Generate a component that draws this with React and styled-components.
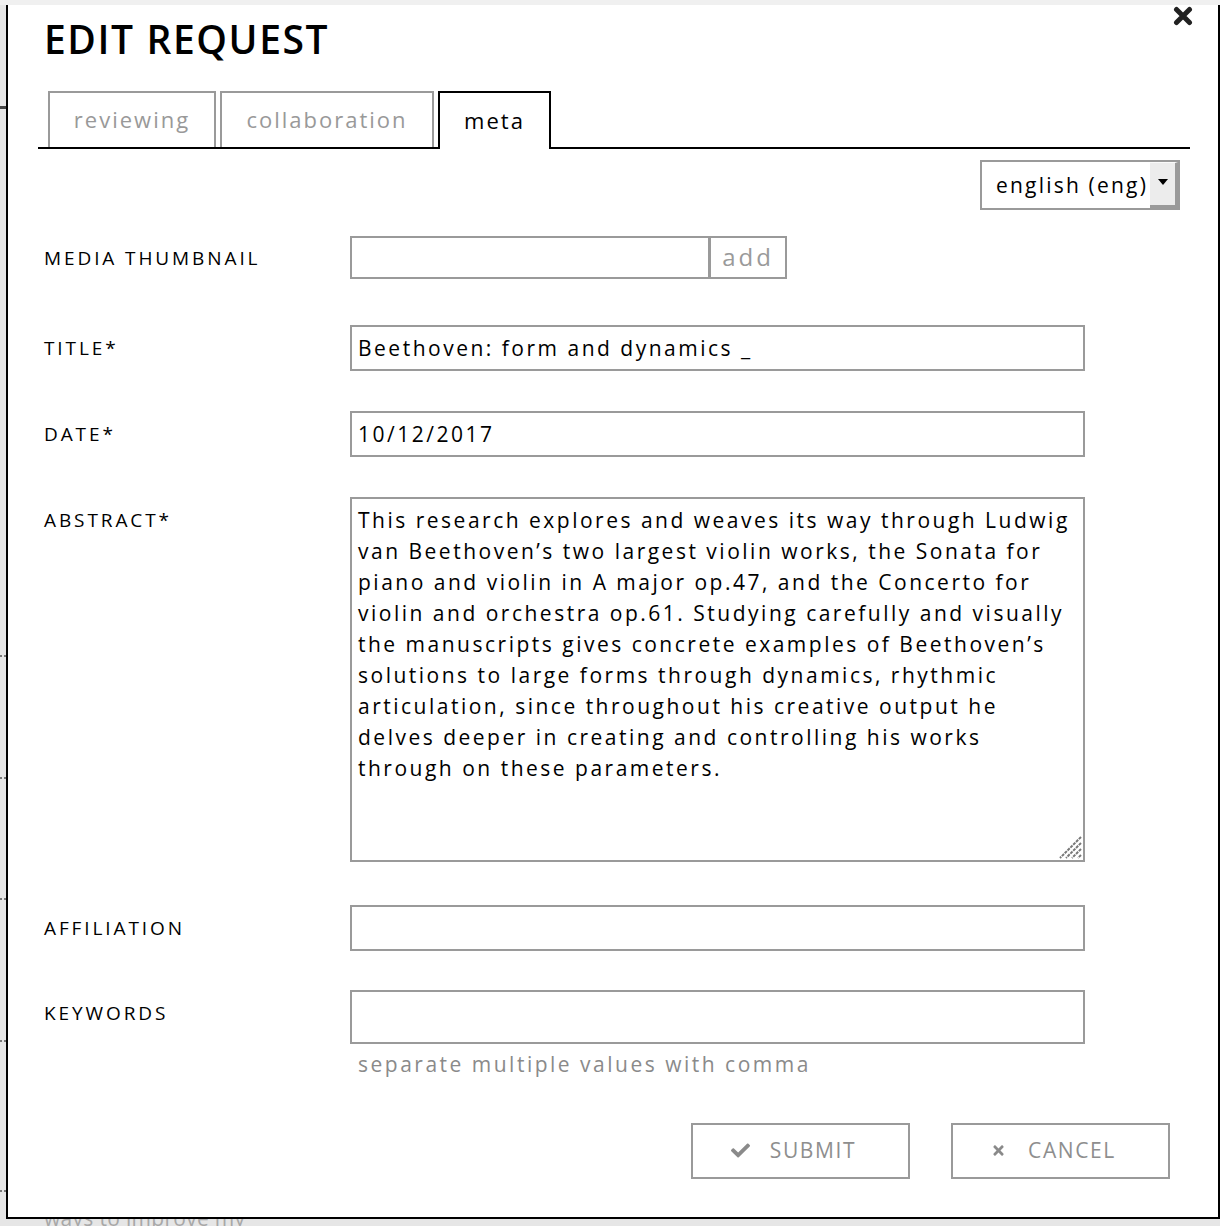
import React from "react";
import styled, { createGlobalStyle } from "styled-components";
import { FaCheck, FaTimes } from "react-icons/fa";

const Global = createGlobalStyle`
  html, body { margin: 0; padding: 0; }
  body {
    background: #e6e6e6;
    font-family: "Open Sans", "DejaVu Sans", sans-serif;
    width: 1220px;
    height: 1226px;
    overflow: hidden;
    position: relative;
  }
  * { box-sizing: border-box; }
`;

const TopStrip = styled.div`
  height: 5px;
  background: #f0f0f0;
`;

const BackdropText = styled.div`
  position: absolute;
  left: 44px;
  top: 1204px;
  font-size: 21px;
  letter-spacing: 0.3px;
  color: #a8a8a8;
`;

const SideMark = styled.div`
  position: absolute;
  left: 0;
  width: 6px;
  top: ${(p) => p.$top}px;
  border-top: 2px dotted #777;
`;

const SideBar = styled.div`
  position: absolute;
  left: 0;
  width: 6px;
  top: 106px;
  height: 3px;
  background: #444;
`;

const Modal = styled.div`
  position: absolute;
  left: 6px;
  top: 5px;
  width: 1214px;
  height: 1214px;
  background: #fff;
  border: 2px solid #000;
  border-top: none;
  padding: 0 30px;
`;

const Close = styled.button`
  position: absolute;
  right: 24px;
  top: 0;
  width: 22px;
  height: 22px;
  padding: 0;
  border: none;
  background: none;
  display: flex;
  align-items: center;
  justify-content: center;
`;

const Title = styled.h1`
  margin: 0;
  padding: 8px 0 0 6px;
  height: 86px;
  font-size: 39px;
  font-weight: 600;
  letter-spacing: 1.6px;
  color: #000;
  line-height: 52px;
`;

const TabBar = styled.div`
  display: flex;
  gap: 4px;
  padding-left: 10px;
  width: 1152px;
  border-bottom: 2px solid #000;
  height: 58px;
`;

const Tab = styled.div`
  height: ${(p) => (p.$active ? "58px" : "56px")};
  margin-bottom: ${(p) => (p.$active ? "-2px" : "0")};
  width: ${(p) => p.$w}px;
  border: 2px solid ${(p) => (p.$active ? "#000" : "#9a9a9a")};
  border-bottom: ${(p) => (p.$active ? "none" : "0")};
  background: #fff;
  display: flex;
  align-items: center;
  justify-content: center;
  font-size: 22px;
  letter-spacing: 2px;
  color: ${(p) => (p.$active ? "#000" : "#999")};
  padding-bottom: 2px;
`;

const LangRow = styled.div`
  display: flex;
  justify-content: flex-end;
  padding: 11px 8px 0 0;
  height: 87px;
`;

const Select = styled.div`
  width: 200px;
  height: 50px;
  border: 2px solid #9a9a9a;
  display: flex;
  align-items: stretch;
`;

const SelectText = styled.div`
  flex: 1;
  display: flex;
  align-items: center;
  padding-left: 14px;
  font-size: 21px;
  letter-spacing: 2.2px;
  color: #000;
  white-space: nowrap;
  overflow: hidden;
`;

const SelectArrow = styled.div`
  flex: 0 0 28px;
  background: #ececec;
  border-right: 3px solid #9a9a9a;
  border-bottom: 3px solid #9a9a9a;
  border-top: 1px solid #fafafa;
  display: flex;
  justify-content: center;
  align-items: center;
  padding-bottom: 4px;
  &::after {
    content: "";
    width: 0;
    height: 0;
    border-left: 5px solid transparent;
    border-right: 5px solid transparent;
    border-top: 6px solid #000;
  }
`;

const Form = styled.div`
  display: grid;
  grid-template-columns: 306px 735px;
  padding-left: 6px;
`;

const Label = styled.div`
  font-size: 19px;
  letter-spacing: 2.9px;
  color: #000;
  text-transform: uppercase;
  padding-top: ${(p) => p.$pt || 10}px;
  margin-bottom: ${(p) => p.$mb}px;
`;

const Field = styled.div`
  position: relative;
  margin-bottom: ${(p) => p.$mb}px;
`;

const Input = styled.input`
  display: block;
  width: 100%;
  height: ${(p) => p.$h || 46}px;
  border: 2px solid #9a9a9a;
  padding: 0 6px;
  font-family: "Open Sans", sans-serif;
  font-size: 21px;
  letter-spacing: 2.5px;
  color: #000;
  outline: none;
  background: #fff;
`;

const ThumbRow = styled.div`
  display: flex;
  width: 437px;
  height: 43px;
`;

const ThumbInput = styled.div`
  width: 361px;
  border: 2px solid #9a9a9a;
  border-right: 3px solid #9a9a9a;
`;

const AddButton = styled.div`
  flex: 1;
  border: 2px solid #9a9a9a;
  border-left: none;
  display: flex;
  align-items: center;
  justify-content: center;
  font-size: 24px;
  letter-spacing: 3px;
  color: #9a9a9a;
  padding-bottom: 3px;
`;

const TextArea = styled.textarea`
  display: block;
  width: 100%;
  height: 365px;
  border: 2px solid #9a9a9a;
  padding: 6px 6px;
  font-family: "Open Sans", sans-serif;
  font-size: 21px;
  line-height: 31px;
  letter-spacing: 2.5px;
  color: #000;
  outline: none;
  resize: none;
`;

const Grip = styled.svg`
  position: absolute;
  right: 3px;
  bottom: 3px;
  pointer-events: none;
`;

const Hint = styled.div`
  padding: 6px 0 0 8px;
  font-size: 21px;
  letter-spacing: 2.5px;
  color: #8a8a8a;
`;

const Actions = styled.div`
  display: flex;
  justify-content: flex-end;
  gap: 41px;
  padding: 45px 18px 0 0;
`;

const Button = styled.button`
  width: 219px;
  height: 56px;
  border: 2px solid #9a9a9a;
  background: #fff;
  display: flex;
  align-items: center;
  justify-content: center;
  gap: ${(p) => p.$gap}px;
  font-family: "Open Sans", sans-serif;
  font-size: 21px;
  letter-spacing: 1.6px;
  color: #8e8e8e;
  padding: 0 ${(p) => p.$pr}px 2px 0;
  svg { color: #8a8a8a; }
`;

const abstract =
  "This research explores and weaves its way through Ludwig van Beethoven\u2019s two largest violin works, the Sonata for piano and violin in A major op.47, and the Concerto for violin and orchestra op.61. Studying carefully and visually the manuscripts gives concrete examples of Beethoven\u2019s solutions to large forms through dynamics, rhythmic articulation, since throughout his creative output he delves deeper in creating and controlling his works through on these parameters.";

export default function App() {
  return (
    <>
      <Global />
      <TopStrip />
      <SideBar />
      {[655, 777, 898, 1040, 1190].map((t) => (
        <SideMark key={t} $top={t} />
      ))}
      <BackdropText>ways to improve my</BackdropText>
      <Modal>
        <Close aria-label="close">
          <svg width="20" height="20" viewBox="0 0 20 20">
            <path d="M3.5 3.5 L16.5 16.5 M16.5 3.5 L3.5 16.5" stroke="#222" strokeWidth="5" strokeLinecap="round" />
          </svg>
        </Close>
        <Title>EDIT REQUEST</Title>
        <TabBar>
          <Tab $w={168}>reviewing</Tab>
          <Tab $w={214}>collaboration</Tab>
          <Tab $w={113} $active>meta</Tab>
        </TabBar>
        <LangRow>
          <Select>
            <SelectText>english (eng)</SelectText>
            <SelectArrow />
          </Select>
        </LangRow>
        <Form>
          <Label $pt={9} $mb={46}>Media thumbnail</Label>
          <Field $mb={46}>
            <ThumbRow>
              <ThumbInput />
              <AddButton>add</AddButton>
            </ThumbRow>
          </Field>

          <Label $mb={40}>Title*</Label>
          <Field $mb={40}>
            <Input defaultValue="Beethoven: form and dynamics _" />
          </Field>

          <Label $mb={40}>Date*</Label>
          <Field $mb={40}>
            <Input defaultValue="10/12/2017" />
          </Field>

          <Label $mb={43}>Abstract*</Label>
          <Field $mb={43}>
            <TextArea defaultValue={abstract} />
            <Grip width="26" height="26" viewBox="0 0 26 26">
              <path
                d="M25 4 L4 25 M25 10 L10 25 M25 16 L16 25 M25 22 L22 25"
                stroke="#777"
                strokeWidth="2"
                strokeDasharray="3 1"
              />
            </Grip>
          </Field>

          <Label $mb={39}>Affiliation</Label>
          <Field $mb={39}>
            <Input />
          </Field>

          <Label $pt={10} $mb={0}>Keywords</Label>
          <Field $mb={0}>
            <Input $h={54} />
            <Hint>separate multiple values with comma</Hint>
          </Field>
        </Form>
        <Actions>
          <Button $gap={20} $pr={14}>
            <FaCheck size={19} />
            SUBMIT
          </Button>
          <Button $gap={22} $pr={14}>
            <FaTimes size={15} />
            CANCEL
          </Button>
        </Actions>
      </Modal>
    </>
  );
}
